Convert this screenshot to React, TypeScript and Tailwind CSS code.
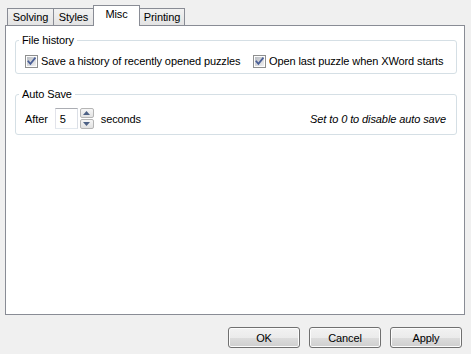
import React from "react";

function CheckBox() {
  return (
    <svg width="13" height="13" viewBox="0 0 13 13" className="shrink-0">
      <defs>
        <linearGradient id="cbg" x1="0" y1="0" x2="1" y2="1">
          <stop offset="0" stopColor="#b9bdc3" />
          <stop offset="1" stopColor="#f0f0f1" />
        </linearGradient>
      </defs>
      <rect x="0.5" y="0.5" width="12" height="12" fill="#fdfdfd" stroke="#8e8f8f" />
      <rect x="2" y="2" width="9" height="9" fill="url(#cbg)" />
      <path d="M3.3 6.4 L5.4 8.9 L9.9 3.3" stroke="#4a5f97" strokeWidth="1.7" fill="none" strokeLinecap="square" />
    </svg>
  );
}

function Tab({ label, w, selected }: { label: string; w: number; selected?: boolean }) {
  if (selected) {
    return (
      <div
        className="relative z-10 -mb-px -ml-px flex h-[21px] items-start justify-center border border-b-0 border-[#898c95] bg-white pt-[1px] text-black"
        style={{ width: w }}
      >
        {label}
      </div>
    );
  }
  return (
    <div
      className="-ml-px flex h-[17px] items-center justify-center border border-b-0 border-[#898c95] bg-[linear-gradient(#f2f2f2,#e3e3e3)] text-black first:ml-0"
      style={{ width: w }}
    >
      {label}
    </div>
  );
}

function Button({ label }: { label: string }) {
  return (
    <div className="flex h-[21px] w-[72px] items-center justify-center rounded-[3px] border border-[#707070] bg-[linear-gradient(#f2f2f2_0%,#ebebeb_50%,#dddddd_50%,#cfcfcf_100%)] text-black shadow-[inset_0_0_0_1px_#fcfcfc]">
      {label}
    </div>
  );
}

export default function App() {
  return (
    <div className="flex h-[354px] w-[471px] flex-col whitespace-nowrap bg-[#f0f0f0] font-['Liberation_Sans',Arial,sans-serif] text-[11px] leading-[14px] tracking-[-0.1px] text-black">
      <div className="flex h-[25px] items-end pl-[7px]">
        <Tab label="Solving" w={47} />
        <Tab label="Styles" w={41} />
        <Tab label="Misc" w={47} selected />
        <Tab label="Printing" w={46} />
      </div>
      <div className="ml-[5px] mr-[6px] flex h-[290px] flex-col border border-[#898c95] bg-white px-[9px] pr-[7px] pt-[7px]">
        <fieldset className="rounded-[3px] border border-[#d5dfe5] px-[3px] pb-[5px]">
          <legend className="px-[3px]">File history</legend>
          <div className="flex items-center pl-[6px] pt-[7px]">
            <CheckBox />
            <span className="ml-[3px] w-[212px]">Save a history of recently opened puzzles</span>
            <span className="flex items-center">
              <CheckBox />
              <span className="ml-[3px]">Open last puzzle when XWord starts</span>
            </span>
          </div>
        </fieldset>
        <fieldset className="mt-[13px] rounded-[3px] border border-[#d5dfe5] px-[3px] pb-[5px]">
          <legend className="px-[3px]">Auto Save</legend>
          <div className="flex items-center pl-[6px] pr-[7px] pt-[7px]">
            <span>After</span>
            <div className="ml-[7px] flex h-[21px] w-[23px] items-center border border-[#abadb3] border-l-[#e2e3ea] border-r-[#dbdfe6] border-b-[#e3e9ef] pl-[4px]">
              5
            </div>
            <div className="ml-[2px] flex h-[21px] w-[14px] flex-col gap-px">
              <div className="flex h-[10px] items-center justify-center rounded-[2px] border border-[#b5b5b5] bg-[linear-gradient(#f6f6f6,#e2e2e2)]">
                <svg width="7" height="4" viewBox="0 0 7 4">
                  <path d="M0 4 L3.5 0 L7 4 Z" fill="#4d6185" />
                </svg>
              </div>
              <div className="flex h-[10px] items-center justify-center rounded-[2px] border border-[#b5b5b5] bg-[linear-gradient(#f6f6f6,#e2e2e2)]">
                <svg width="7" height="4" viewBox="0 0 7 4">
                  <path d="M0 0 L3.5 4 L7 0 Z" fill="#4d6185" />
                </svg>
              </div>
            </div>
            <span className="ml-[7px]">seconds</span>
            <span className="ml-auto italic">Set to 0 to disable auto save</span>
          </div>
        </fieldset>
      </div>
      <div className="flex justify-end gap-[9px] pr-[9px] pt-[12px]">
        <Button label="OK" />
        <Button label="Cancel" />
        <Button label="Apply" />
      </div>
    </div>
  );
}
